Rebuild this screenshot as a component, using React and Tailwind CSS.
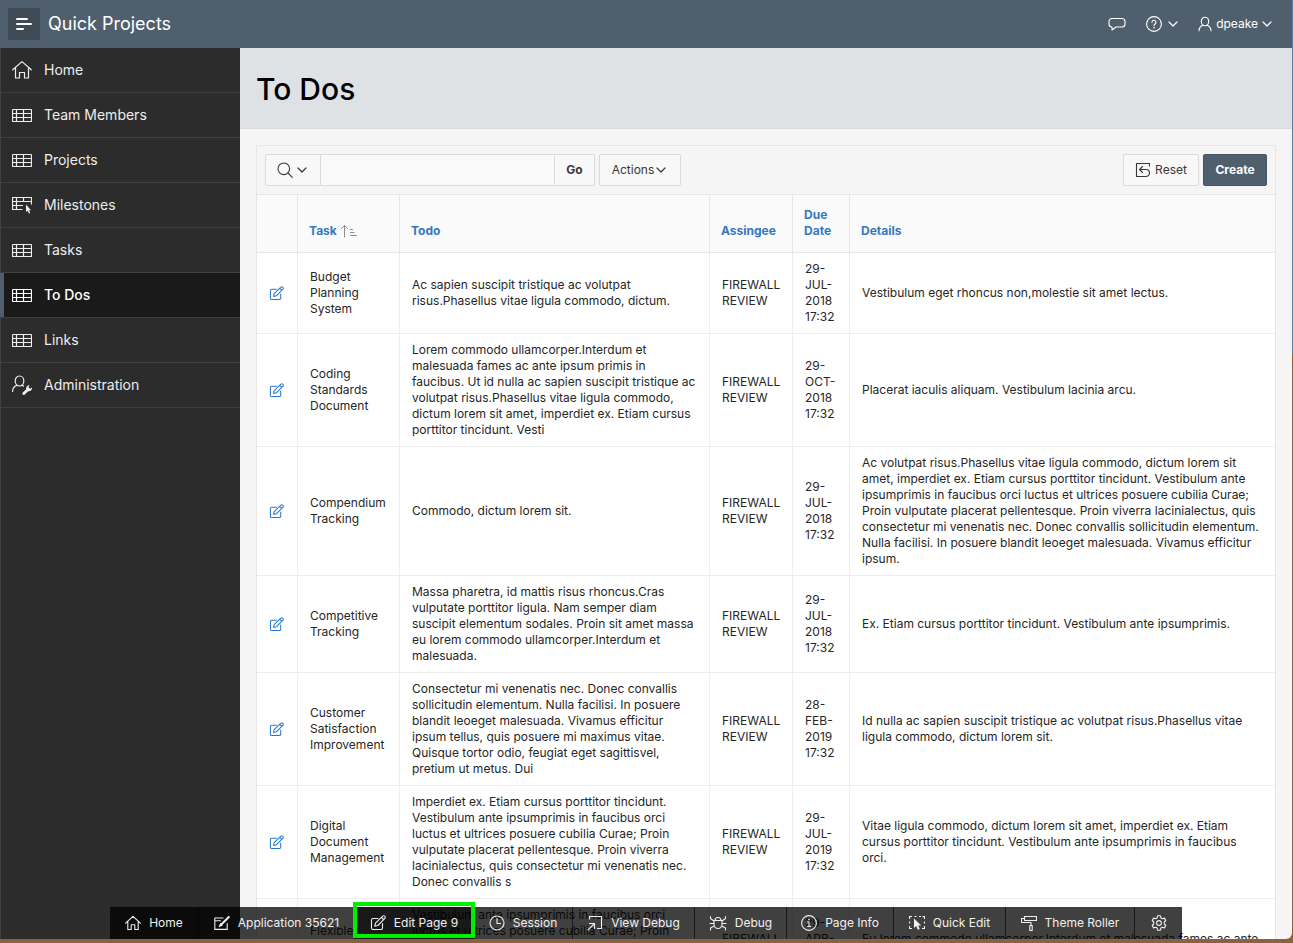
import React from "react";

function Svg({ w = 16, h = 16, className = "", children, sw = 1 }) {
  return (
    <svg
      width={w}
      height={h}
      viewBox={`0 0 ${w} ${h}`}
      fill="none"
      stroke="currentColor"
      strokeWidth={sw}
      strokeLinecap="round"
      strokeLinejoin="round"
      aria-hidden="true"
      className={`shrink-0 ${className}`}
    >
      {children}
    </svg>
  );
}

const HomeNavIcon = () => (
  <Svg w={20} h={20} sw={1.2}>
    <path d="M.7 9.8 10 1.6l9.3 8.2M3.5 8v10h4v-5.5h5V18h4V8" />
  </Svg>
);

const TableIcon = () => (
  <Svg w={20} h={20} sw={1.2}>
    <rect x="0.5" y="4.5" width="19" height="12" rx="0.5" />
    <path d="M.5 8.5h19M.5 12.5h19M4.5 4.5v12M11.5 4.5v12" />
  </Svg>
);

const TablePointerIcon = () => (
  <Svg w={20} h={20} sw={1.2}>
    <path d="M19.5 9V2.5H.5v12H10M.5 6.5h19M.5 10.5h10M4.5 2.5v12M11.500 2.500v4" />
    <path
      d="M14 9.500v7.500l1.700-1.300 1.200 2.800 1.300-.6-1.200-2.700h2z"
      fill="currentColor"
      stroke="none"
    />
  </Svg>
);

const UserWrenchIcon = () => (
  <Svg w={20} h={20} sw={1.2}>
    <ellipse cx="7.500" cy="6" rx="4.300" ry="5" />
    <path d="M5 10.300c-2.500.9-4.400 2.600-4.400 6.200M10 10.300l1.500.8" />
    <path d="M11.800 18.600 15.200 15.300" strokeWidth="2.800" />
    <path
      d="M17.600 10.300a3.200 3.200 0 0 0-3.300 4.200l1.900 1.700a3.200 3.200 0 0 0 3.800-3.700l-1.900 1.300-1.600-1.500z"
      fill="currentColor"
      stroke="none"
    />
  </Svg>
);

const ChevronIcon = () => (
  <Svg w={10} h={16} sw={1.2}>
    <path d="M1 6l4 4 4-4" />
  </Svg>
);

const ChatIcon = () => (
  <Svg w={18} h={16} sw={1.1}>
    <path d="M4 2.500h10a3 3 0 0 1 3 3v2.500a3 3 0 0 1-3 3H8l-4 3v-3a3 3 0 0 1-3-3V5.500a3 3 0 0 1 3-3z" />
  </Svg>
);

const HelpIcon = () => (
  <Svg w={16} h={16} sw={1.1}>
    <circle cx="8" cy="8" r="7.400" />
    <path d="M6 6.300a2 2 0 1 1 3 1.700c-.7.4-1 .7-1 1.500" />
    <path d="M8 11.500v.2" strokeWidth="1.500" />
  </Svg>
);

const UserIcon = () => (
  <Svg w={14} h={16} sw={1.1}>
    <ellipse cx="7" cy="5.500" rx="3.700" ry="4.300" />
    <path d="M5 9.300C2.800 10 1.200 11.500 1 14.800M9 9.300c2.200.7 3.800 2.200 4 5.500" />
  </Svg>
);

const SearchIcon = () => (
  <Svg w={16} h={16} sw={1.1}>
    <circle cx="6.800" cy="6.800" r="5.800" />
    <path d="M11 11l4.300 4.300" />
  </Svg>
);

const ResetIcon = () => (
  <Svg w={16} h={16} sw={1.1}>
    <path d="M14.500 4V1.500h-13v13h9M4.500 7.500h6.500a3.500 3.500 0 0 1 0 7M7.500 4.500l-3 3 3 3" />
  </Svg>
);

const SortIcon = () => (
  <Svg w={17} h={14} className="text-[#8c8c8c]">
    <path d="M3.500 13V1.500M.5 4.500l3-3 3 3M9.500 5.500h2M9.500 8.500h3.500M9.500 11.500h6" />
  </Svg>
);

const EditIcon = ({ className }) => (
  <Svg w={16} h={16} sw={1.1} className={className}>
    <path d="M8 3.500H3A1.500 1.500 0 0 0 1.500 5v8A1.500 1.500 0 0 0 3 14.500h8a1.500 1.500 0 0 0 1.500-1.500V8.500" />
    <path d="M4.800 11.200l.7-3L12.700 1.100a1.300 1.300 0 0 1 1.900 0l.3.300a1.300 1.300 0 0 1 0 1.900L7.800 10.500zM11.500 2.500l2 2" />
  </Svg>
);

const HomeIcon = () => (
  <Svg sw={1.1}>
    <path d="M.6 8.200 8 1.300l7.400 6.900M2.800 6.800v7.700h3.400v-4.700h3.600v4.700h3.400V6.800" />
  </Svg>
);

const AppEditIcon = () => (
  <Svg sw={1.1}>
    <path d="M9 3H.8v11.400h12.400V8.500M.8 5.700h5.700" />
    <path d="M14.800 2 7.500 9.300" strokeWidth="2" />
    <path d="M6.800 8.500 5.300 11.500l3-1.500" fill="currentColor" />
  </Svg>
);

const ClockIcon = () => (
  <Svg sw={1.1}>
    <circle cx="8" cy="8" r="7" />
    <path d="M8 3.500V8.500h3.500" />
  </Svg>
);

const ViewDebugIcon = () => (
  <Svg sw={1.1}>
    <path d="M2.500 4V1.500h12v12h-4M1 15l6-6M2.500 8.500H7.500V13.500" />
  </Svg>
);

const BugIcon = () => (
  <Svg w={18} h={16} sw={1.1}>
    <path d="M5 5.500h8v4a4 4 0 0 1-8 0zM6 5.500a3 3 0 0 1 6 0M1.500 1.500v2L5 6M16.500 1.500v2L13 6M1 8.500h4M13 8.500h4M1.500 15v-2l3.700-2M16.500 15v-2l-3.700-2" />
  </Svg>
);

const InfoIcon = () => (
  <Svg sw={1.1}>
    <circle cx="8" cy="8" r="7.400" />
    <path d="M6.500 7H8v4.500M6.300 11.500h3.400" />
    <path d="M8 4.300v.2" strokeWidth="1.600" />
  </Svg>
);

const QuickEditIcon = () => (
  <Svg sw={1.2}>
    <path
      d="M.5 4V1.500H3M5.500 1.500h2M10 1.500h2M13.500 1.500h2V4M15.500 6.500v2M15.500 11v2.500H13M.5 6.500v2M.5 11v2.500H3"
      strokeLinecap="butt"
    />
    <path d="M5 3.500v9.500l2.300-1.900 1.500 3.600 1.900-.8-1.500-3.500h3z" fill="currentColor" stroke="none" />
  </Svg>
);

const RollerIcon = () => (
  <Svg sw={1.1}>
    <path d="M3.500 1.500h12v4h-12zM3.500 3.500h-3v4h9.500v3M8.800 10.500h2.400v5H8.800z" />
  </Svg>
);

const GearIcon = () => (
  <Svg sw={1.1}>
    <circle cx="8" cy="8" r="2.400" />
    <path d="M6.600.8h2.800l.5 2.100 1.400.8 2.100-.6 1.400 2.400L13.300 7v2l1.500 1.500-1.400 2.400-2.100-.6-1.400.8-.5 2.100H6.600l-.5-2.100-1.400-.8-2.100.6-1.400-2.400L2.700 9V7L1.200 5.500l1.400-2.400 2.100.6 1.400-.8z" />
  </Svg>
);

const NAV = [
  { label: "Home", Icon: HomeNavIcon },
  { label: "Team Members", Icon: TableIcon },
  { label: "Projects", Icon: TableIcon },
  { label: "Milestones", Icon: TablePointerIcon },
  { label: "Tasks", Icon: TableIcon },
  { label: "To Dos", Icon: TableIcon, active: true },
  { label: "Links", Icon: TableIcon },
  { label: "Administration", Icon: UserWrenchIcon },
];

const ROWS = [
  {
    task: "Budget Planning System",
    todo: "Ac sapien suscipit tristique ac volutpat\nrisus.Phasellus vitae ligula commodo, dictum.",
    due: "29-\nJUL-\n2018\n17:32",
    details: "Vestibulum eget rhoncus non,molestie sit amet lectus.",
  },
  {
    task: "Coding Standards Document",
    todo: "Lorem commodo ullamcorper.Interdum et\nmalesuada fames ac ante ipsum primis in\nfaucibus. Ut id nulla ac sapien suscipit tristique ac\nvolutpat risus.Phasellus vitae ligula commodo,\ndictum lorem sit amet, imperdiet ex. Etiam cursus\nporttitor tincidunt. Vesti",
    due: "29-\nOCT-\n2018\n17:32",
    details: "Placerat iaculis aliquam. Vestibulum lacinia arcu.",
  },
  {
    task: "Compendium Tracking",
    todo: "Commodo, dictum lorem sit.",
    due: "29-\nJUL-\n2018\n17:32",
    details:
      "Ac volutpat risus.Phasellus vitae ligula commodo, dictum lorem sit\namet, imperdiet ex. Etiam cursus porttitor tincidunt. Vestibulum ante\nipsumprimis in faucibus orci luctus et ultrices posuere cubilia Curae;\nProin vulputate placerat pellentesque. Proin viverra lacinialectus, quis\nconsectetur mi venenatis nec. Donec convallis sollicitudin elementum.\nNulla facilisi. In posuere blandit leoeget malesuada. Vivamus efficitur\nipsum.",
  },
  {
    task: "Competitive Tracking",
    todo: "Massa pharetra, id mattis risus rhoncus.Cras\nvulputate porttitor ligula. Nam semper diam\nsuscipit elementum sodales. Proin sit amet massa\neu lorem commodo ullamcorper.Interdum et\nmalesuada.",
    due: "29-\nJUL-\n2018\n17:32",
    details: "Ex. Etiam cursus porttitor tincidunt. Vestibulum ante ipsumprimis.",
  },
  {
    task: "Customer Satisfaction Improvement",
    todo: "Consectetur mi venenatis nec. Donec convallis\nsollicitudin elementum. Nulla facilisi. In posuere\nblandit leoeget malesuada. Vivamus efficitur\nipsum tellus, quis posuere mi maximus vitae.\nQuisque tortor odio, feugiat eget sagittisvel,\npretium ut metus. Dui",
    due: "28-\nFEB-\n2019\n17:32",
    details:
      "Id nulla ac sapien suscipit tristique ac volutpat risus.Phasellus vitae\nligula commodo, dictum lorem sit.",
  },
  {
    task: "Digital Document Management",
    todo: "Imperdiet ex. Etiam cursus porttitor tincidunt.\nVestibulum ante ipsumprimis in faucibus orci\nluctus et ultrices posuere cubilia Curae; Proin\nvulputate placerat pellentesque. Proin viverra\nlacinialectus, quis consectetur mi venenatis nec.\nDonec convallis s",
    due: "29-\nJUL-\n2019\n17:32",
    details:
      "Vitae ligula commodo, dictum lorem sit amet, imperdiet ex. Etiam\ncursus porttitor tincidunt. Vestibulum ante ipsumprimis in faucibus\norci.",
  },
  {
    task: "Flexible Tracking System",
    todo: "Vestibulum ante ipsumprimis in faucibus orci\nluctus et ultrices posuere cubilia Curae; Proin\nvulputate placerat pellentesque. Proin viverra\nlacinialectus, quis consectetur mi venenatis nec.\nDonec convallis.",
    due: "29-\nAPR-\n2019\n17:32",
    details:
      "Eu lorem commodo ullamcorper.Interdum et malesuada fames ac ante\nipsum primis in faucibus.",
  },
];

const TOOLS = [
  { label: "Home", Icon: HomeIcon, width: "w-[89px]" },
  { label: "Application 35621", Icon: AppEditIcon, width: "w-[156px]" },
  { label: "Edit Page 9", Icon: EditIcon, width: "w-[119px]", marked: true },
  { label: "Session", Icon: ClockIcon, width: "w-[99px]" },
  { label: "View Debug", Icon: ViewDebugIcon, width: "w-[122px]" },
  { label: "Debug", Icon: BugIcon, width: "w-[92px]" },
  { label: "Page Info", Icon: InfoIcon, width: "w-[107px]" },
  { label: "Quick Edit", Icon: QuickEditIcon, width: "w-[112px]" },
  { label: "Theme Roller", Icon: RollerIcon, width: "w-[129px]" },
];

function Header() {
  return (
    <header className="flex h-12 shrink-0 items-center bg-[#505f6d] pl-2 pr-5 text-white">
      <button
        type="button"
        aria-label="Toggle navigation"
        className="flex size-8 items-center justify-center rounded-xs bg-[#3f4a55]"
      >
        <Svg sw={2}>
          <path d="M1 3h10M1 8h14M1 13h6" />
        </Svg>
      </button>
      <a href="#home" className="ml-2 text-lg">
        Quick Projects
      </a>
      <div className="ml-auto flex items-center gap-5 text-xs">
        <button type="button" aria-label="Feedback">
          <ChatIcon />
        </button>
        <button type="button" aria-label="Help" className="flex items-center gap-1.5">
          <HelpIcon />
          <ChevronIcon />
        </button>
        <button type="button" className="flex items-center gap-1">
          <UserIcon />
          <span>dpeake</span>
          <ChevronIcon />
        </button>
      </div>
    </header>
  );
}

function SideNav() {
  return (
    <nav className="flex w-60 shrink-0 flex-col bg-[#2c2c2c] text-sm text-[#eeeeee]">
      <ul>
        {NAV.map(({ label, Icon, active }) => (
          <li key={label} className="border-b border-[#404040]">
            <a
              href={"#" + label.toLowerCase().replace(" ", "-")}
              aria-current={active ? "page" : undefined}
              className={
                active
                  ? "flex h-11 items-center gap-3 border-l-4 border-[#505f6d] bg-[#1a1a1a] pl-2 font-medium text-white"
                  : "flex h-11 items-center gap-3 border-l border-[#404040] pl-[11px]"
              }
            >
              <Icon />
              {label}
            </a>
          </li>
        ))}
      </ul>
      <div className="flex-1 border-l border-[#404040]" />
    </nav>
  );
}

const plainButton =
  "flex h-8 items-center justify-center border border-[#dadada] bg-[#f8f8f8] text-xs text-[#383838]";

function ReportToolbar() {
  return (
    <div className="flex items-center justify-between border-b border-[#e6e6e6] p-2">
      <div className="flex items-center">
        <button type="button" aria-label="Search columns" className={plainButton + " w-14 gap-1 rounded-l-xs pr-0.5"}>
          <SearchIcon />
          <ChevronIcon />
        </button>
        <input
          type="text"
          aria-label="Search"
          className="h-8 w-[233px] border-y border-[#dadada] bg-[#f9f9f9] px-2 text-xs outline-none"
        />
        <button type="button" className={plainButton + " mr-1 w-[41px] rounded-r-xs font-bold"}>
          Go
        </button>
        <button type="button" className={plainButton + " w-[82px] gap-0.5 rounded-xs pr-0.5"}>
          Actions
          <ChevronIcon />
        </button>
      </div>
      <div className="flex items-center gap-1">
        <button type="button" className={plainButton + " w-[76px] gap-1 rounded-xs"}>
          <ResetIcon />
          Reset
        </button>
        <button
          type="button"
          className="h-8 w-16 rounded-xs border border-[#46545f] bg-[#505f6d] text-xs font-bold text-white"
        >
          Create
        </button>
      </div>
    </div>
  );
}

const th = "border-b border-r border-[#e6e6e6] px-[11px] pt-3 pb-[13px] text-left align-bottom font-bold text-[#3577bf]";
const td = "border-b border-r border-[#eeeeee] px-3 py-2 align-middle";
const lines = " whitespace-pre";

function ReportTable() {
  return (
    <table className="w-full table-fixed border-separate border-spacing-0 bg-white text-xs leading-4 text-[#262626]">
      <colgroup>
        <col className="w-[41px]" />
        <col className="w-[102px]" />
        <col className="w-[310px]" />
        <col className="w-[83px]" />
        <col className="w-[57px]" />
        <col />
      </colgroup>
      <thead className="bg-[#fafafa]">
        <tr>
          <th className={th} aria-label="Edit" />
          <th className={th}>
            <a href="#sort-task" className="flex items-center gap-1">
              Task
              <SortIcon />
            </a>
          </th>
          <th className={th}>
            <a href="#sort-todo">Todo</a>
          </th>
          <th className={th}>
            <a href="#sort-assingee">Assingee</a>
          </th>
          <th className={th}>
            <a href="#sort-due">Due Date</a>
          </th>
          <th className={th + " border-r-0"}>
            <a href="#sort-details">Details</a>
          </th>
        </tr>
      </thead>
      <tbody>
        {ROWS.map((r) => (
          <tr key={r.task}>
            <td className={td}>
              <a href="#edit" aria-label={"Edit " + r.task} className="flex text-[#2578cf]">
                <EditIcon className="size-[15px]" />
              </a>
            </td>
            <td className={td}>{r.task}</td>
            <td className={td + lines}>{r.todo}</td>
            <td className={td}>FIREWALL REVIEW</td>
            <td className={td + lines}>{r.due}</td>
            <td className={td + lines + " border-r-0"}>{r.details}</td>
          </tr>
        ))}
      </tbody>
    </table>
  );
}

function DeveloperToolbar() {
  return (
    <div className="absolute inset-x-0 bottom-0 flex justify-center">
      <div className="flex h-8 bg-black/75 text-xs text-[#f0f0f0]">
        {TOOLS.map(({ label, Icon, width, marked }) => (
          <button
            key={label}
            type="button"
            className={
              width +
              " relative flex items-center justify-center gap-2 whitespace-nowrap border-r border-black/60" +
              (marked ? " bg-black/60" : "")
            }
          >
            <Icon />
            {label}
            {marked && <span className="absolute -inset-x-0.5 -top-[5px] bottom-px border-4 border-[#00ee00]" />}
          </button>
        ))}
        <button type="button" aria-label="Settings" className="flex w-[47px] items-center justify-center">
          <GearIcon />
        </button>
      </div>
    </div>
  );
}

export default function App() {
  return (
    <div className="h-screen overflow-hidden bg-linear-to-b from-[#5d7ea3] from-37% to-[#8a6240] to-38% pr-px pb-1 font-['Inter','Liberation_Sans',sans-serif]">
      <div className="relative flex h-full flex-col overflow-hidden rounded-br-md bg-[#f5f5f5]">
        <Header />
        <div className="flex min-h-0 flex-1">
          <SideNav />
          <main className="min-w-0 flex-1 overflow-hidden">
            <div className="flex h-[81px] items-center border-b border-[#d9dbdd] bg-[#dfe2e5] px-4 pt-0.5">
              <h1 className="text-3xl font-medium text-black">To Dos</h1>
            </div>
            <div className="p-4">
              <section className="border border-[#e6e6e6]">
                <ReportToolbar />
                <ReportTable />
              </section>
            </div>
          </main>
        </div>
        <DeveloperToolbar />
      </div>
    </div>
  );
}
